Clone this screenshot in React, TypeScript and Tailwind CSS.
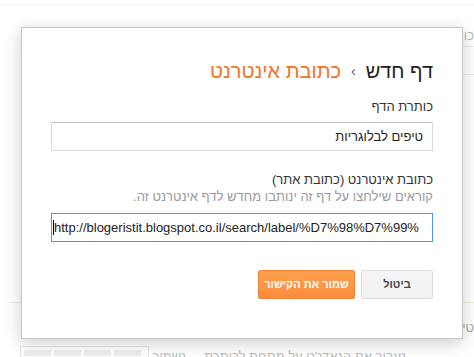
const FONT = { fontFamily: '"Liberation Sans", Arial, sans-serif' };

export default function App() {
  return (
    <div className="relative w-[474px] h-[357px] overflow-hidden bg-white" style={FONT}>
      {/* page behind the dialog */}
      <div className="flex flex-col">
        <div className="h-[4px]" />
        <div className="h-px bg-[#f1f1f1]" />
        <div className="flex justify-end h-[41px]">
          <div dir="rtl" className="w-[12px] pt-[21px] text-[13px] text-[#bbb] overflow-hidden whitespace-nowrap">כותרת</div>
        </div>
        <div className="ml-auto w-[12px] h-px bg-[#ececec]" />
        <div className="h-[27px]" />
        <div className="ml-auto w-[12px] h-px bg-[#ececec]" />
        <div className="h-[227px]" />
        <div className="ml-[9px] h-px bg-[#f1ede0]" />
        <div className="flex justify-end h-[43px]">
          <div dir="rtl" className="w-[12px] pt-[15px] text-[13px] text-[#aaa] overflow-hidden whitespace-nowrap">טיפים</div>
        </div>
        <div className="flex items-start gap-[15px] pl-[20px] h-[20px]">
          <div className="flex gap-[3px] w-[129px] h-[20px] border border-[#e5e5e5] p-[3px]">
            <div className="w-[27px] h-[6px] bg-[#eee]" />
            <div className="w-[27px] h-[6px] bg-[#eee]" />
            <div className="w-[27px] h-[6px] bg-[#eee]" />
            <div className="w-[27px] h-[6px] bg-[#eee]" />
          </div>
          <div dir="rtl" className="w-[242px] pt-[1px] text-[13px] text-[#bbb] whitespace-nowrap">
            נעבור את הגאדג'ט על מתחת לכותרת&nbsp;&nbsp;&nbsp;&nbsp;&nbsp;נשמור
          </div>
        </div>
      </div>

      {/* dialog */}
      <div
        dir="rtl"
        className="absolute left-[21px] top-[27px] w-[442px] h-[312px] bg-white border border-[#c6c6c6] shadow-[0_4px_16px_rgba(0,0,0,0.2)] px-[29px] pt-[29px] flex flex-col"
      >
        <div className="flex items-center gap-[10px] text-[20px] leading-[28px]">
          <span className="text-[#222]">דף חדש</span>
          <span className="text-[14px] text-[#555]">›</span>
          <span className="text-[#f6731f]">כתובת אינטרנט</span>
        </div>

        <div className="mt-[14px] text-[13px] leading-[16px] text-[#333]">כותרת הדף</div>
        <div className="mt-[7px] h-[29px] border border-[#d9d9d9] border-t-[#c0c0c0] flex items-center px-[9px] text-[13px] text-[#222]">
          טיפים לבלוגריות
        </div>

        <div className="mt-[21px] text-[13px] leading-[16px] text-[#333]">כתובת אינטרנט (כתובת אתר)</div>
        <div className="mt-[1px] text-[13px] leading-[16px] text-[#999]">קוראים שילחצו על דף זה ינותבו מחדש לדף אינטרנט זה.</div>
        <div dir="ltr" className="mt-[8px] h-[29px] border border-[#4d90fe] flex items-center overflow-hidden pl-[1px] pr-[8px]">
          <span className="shrink-0 w-px h-[15px] bg-black" />
          <span className="text-[13px] text-[#222] whitespace-nowrap overflow-hidden">
            http://blogeristit.blogspot.co.il/search/label/%D7%98%D7%99%
          </span>
        </div>

        <div className="mt-[28px] flex gap-[6px]">
          <button className="w-[72px] h-[29px] rounded-[2px] border border-[#dcdcdc] bg-gradient-to-b from-[#f5f5f5] to-[#f1f1f1] text-[11px] font-bold text-[#444]">
            ביטול
          </button>
          <button className="w-[97px] h-[29px] rounded-[2px] border border-[#f0833a] bg-gradient-to-b from-[#ffa150] to-[#fb8c3c] text-[11px] font-bold text-white">
            שמור את הקישור
          </button>
        </div>
      </div>
    </div>
  );
}
